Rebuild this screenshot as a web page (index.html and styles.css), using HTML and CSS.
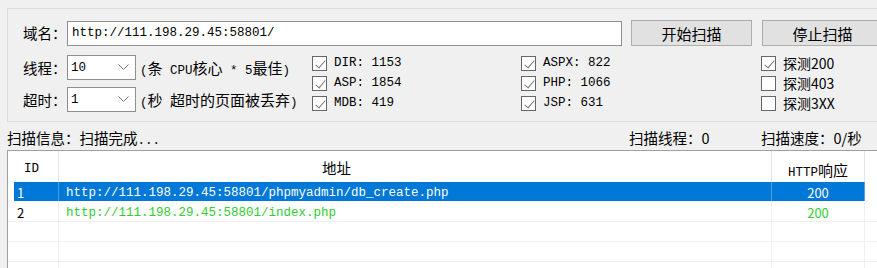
FILE: index.html
```html
<!DOCTYPE html>
<html lang="zh-CN">
<head>
    <meta charset="UTF-8">
    <title>扫描</title>
    <link rel="stylesheet" href="styles.css">
</head>
<body>
    <div class="app">
        <div class="panel">
            <div class="row-top">
                <span class="label">域名：</span>
                <input class="url-input" type="text" value="http://111.198.29.45:58801/">
                <button class="btn btn-start">开始扫描</button>
                <button class="btn btn-stop">停止扫描</button>
            </div>

            <div class="row-opts">
                <div class="opts-left">
                    <div class="field">
                        <span class="label">线程：</span>
                        <div class="combo">
                            <span>10</span>
                            <svg width="11" height="7" viewBox="0 0 11 7"><polyline points="0.5,0.5 5.5,5.5 10.5,0.5" fill="none" stroke="#7a7a7a" stroke-width="1"/></svg>
                        </div>
                        <span class="hint">(<span class="wide">条</span> CPU<span class="wide">核心</span> * 5<span class="wide">最佳</span>)</span>
                    </div>
                    <div class="field">
                        <span class="label">超时：</span>
                        <div class="combo">
                            <span>1</span>
                            <svg width="11" height="7" viewBox="0 0 11 7"><polyline points="0.5,0.5 5.5,5.5 10.5,0.5" fill="none" stroke="#7a7a7a" stroke-width="1"/></svg>
                        </div>
                        <span class="hint">(<span class="wide">秒</span> <span class="wide">超时的页面被丢弃</span>)</span>
                    </div>
                </div>

                <div class="checks checks-a">
                    <label class="check"><span class="box on"></span>DIR: 1153</label>
                    <label class="check"><span class="box on"></span>ASP: 1854</label>
                    <label class="check"><span class="box on"></span>MDB: 419</label>
                </div>
                <div class="checks checks-b">
                    <label class="check"><span class="box on"></span>ASPX: 822</label>
                    <label class="check"><span class="box on"></span>PHP: 1066</label>
                    <label class="check"><span class="box on"></span>JSP: 631</label>
                </div>
                <div class="checks checks-c">
                    <label class="check"><span class="box on"></span>探测200</label>
                    <label class="check"><span class="box"></span>探测403</label>
                    <label class="check"><span class="box"></span>探测3XX</label>
                </div>
            </div>
        </div>

        <div class="status">
            <span>扫描信息：扫描完成<span class="dots">...</span></span>
            <span>扫描线程：0</span>
            <span>扫描速度：0/秒</span>
        </div>

        <div class="list">
            <div class="list-head">
                <div class="th th-id">ID</div>
                <div class="th th-url">地址</div>
                <div class="th th-code">HTTP<span class="wide">响应</span></div>
                <div class="th"></div>
            </div>
            <div class="list-row selected">
                <div class="td td-id">1</div>
                <div class="td td-url">http://111.198.29.45:58801/phpmyadmin/db_create.php</div>
                <div class="td td-code">200</div>
                <div class="td td-rest"></div>
            </div>
            <div class="list-row">
                <div class="td td-id">2</div>
                <div class="td td-url ok">http://111.198.29.45:58801/index.php</div>
                <div class="td td-code ok">200</div>
                <div class="td td-rest"></div>
            </div>
            <div class="list-row">
                <div class="td td-id"></div>
                <div class="td td-url"></div>
                <div class="td td-code"></div>
                <div class="td td-rest"></div>
            </div>
            <div class="list-row">
                <div class="td td-id"></div>
                <div class="td td-url"></div>
                <div class="td td-code"></div>
                <div class="td td-rest"></div>
            </div>
            <div class="list-row">
                <div class="td td-id"></div>
                <div class="td td-url"></div>
                <div class="td td-code"></div>
                <div class="td td-rest"></div>
            </div>
        </div>
    </div>
</body>
</html>
```

FILE: styles.css
```css
* {
    margin: 0;
    padding: 0;
    box-sizing: border-box;
}

body {
    background: #f0f0f0;
    font-family: "Noto Sans CJK SC", sans-serif;
    font-size: 14px;
    color: #000;
    overflow: hidden;
    width: 877px;
    height: 268px;
}

.app {
    width: 920px;
    height: 268px;
    overflow: hidden;
    padding: 8px 0 0 7px;
}

.wide {
    font-family: "Noto Sans CJK SC", sans-serif;
    font-size: 15px;
}

/* top group */
.panel {
    border: 1px solid #dcdcdc;
    height: 114px;
    padding: 11px 0 0 15px;
}

.row-top {
    display: flex;
    align-items: center;
    height: 26px;
}

.label {
    flex: none;
    width: 44px;
    font-size: 14.5px;
    line-height: 20px;
}

.url-input {
    width: 555px;
    height: 25px;
    border: 1px solid #8f8f8f;
    background: #fff;
    padding: 0 4px;
    font-family: "Liberation Mono", monospace;
    font-size: 12.5px;
    color: #000;
    outline: none;
}

.btn {
    flex: none;
    width: 121px;
    height: 26px;
    background: #e1e1e1;
    border: 1px solid #adadad;
    font-family: "Noto Sans CJK SC", sans-serif;
    font-size: 15px;
    color: #000;
}

.btn-start {
    margin-left: 9px;
}

.btn-stop {
    margin-left: 10px;
}

.row-opts {
    display: flex;
    margin-top: 9px;
}

.opts-left {
    width: 289px;
    display: flex;
    flex-direction: column;
    gap: 7px;
}

.field {
    display: flex;
    align-items: center;
    height: 25px;
}

.combo {
    flex: none;
    width: 69px;
    height: 25px;
    border: 1px solid #8f8f8f;
    background: #fff;
    display: flex;
    align-items: center;
    justify-content: space-between;
    padding: 0 6px 0 3px;
    font-family: "Liberation Mono", monospace;
    font-size: 12.5px;
}

.hint {
    margin-left: 4px;
    white-space: nowrap;
    font-family: "Liberation Mono", monospace;
    font-size: 12.5px;
}

.checks {
    display: flex;
    flex-direction: column;
    gap: 4px;
}

.checks-a {
    width: 209px;
}

.checks-b {
    width: 240px;
}

.check {
    display: flex;
    align-items: center;
    height: 16px;
    white-space: nowrap;
    font-family: "Liberation Mono", monospace;
    font-size: 12.5px;
}

.checks-c .check {
    font-family: "Noto Sans CJK SC", sans-serif;
    font-size: 14px;
}

.box {
    flex: none;
    width: 15px;
    height: 15px;
    border: 1px solid #666;
    background: #fff;
    margin-right: 7px;
    position: relative;
}

.box.on::after {
    content: "";
    position: absolute;
    left: 5px;
    top: 1px;
    width: 4px;
    height: 9px;
    border: solid #777;
    border-width: 0 1px 1px 0;
    transform: rotate(40deg);
}

/* status line */
.status {
    display: grid;
    grid-template-columns: 622px 132px auto;
    height: 28px;
    padding-top: 6px;
    line-height: 20px;
    font-size: 14.5px;
    white-space: nowrap;
}

.dots {
    font-family: "Liberation Mono", monospace;
    font-size: 12.5px;
}

/* result list */
.list {
    border-top: 1px solid #a0a0a0;
    border-left: 1px solid #a0a0a0;
    background: #fff;
    height: 200px;
}

.list-head,
.list-row {
    display: grid;
    grid-template-columns: 51px 713px 93px 1fr;
}

.list-head {
    height: 31px;
}

.th {
    border-right: 1px solid #e5e5e5;
    padding-top: 3px;
    line-height: 31px;
    font-family: "Liberation Mono", monospace;
    font-size: 12.5px;
    white-space: nowrap;
}

.th:last-child {
    border-right: none;
}

.th-id {
    text-align: center;
    padding-right: 3px;
}

.th-url {
    font-family: "Noto Sans CJK SC", sans-serif;
    font-size: 14.5px;
    padding-top: 1px;
    padding-left: 263px;
}

.th-code {
    text-align: center;
}

.list-row {
    height: 20px;
    border-bottom: 1px solid #f0f0f0;
}

.td {
    border-right: 1px solid #f0f0f0;
    line-height: 19px;
    padding-top: 2px;
    white-space: nowrap;
    overflow: hidden;
}

.td-id {
    margin-left: 6px;
    padding-left: 3px;
    padding-top: 1px;
    font-size: 13px;
}

.td-url {
    padding-left: 7px;
    font-family: "Liberation Mono", monospace;
    font-size: 12.5px;
}

.td-code {
    text-align: center;
    padding-top: 1px;
    font-size: 13px;
}

.td-rest {
    border-right: none;
}

.ok {
    color: #33cc33;
}

.list-row.selected {
    border-bottom-color: #fff;
}

.list-row.selected .td {
    background: #0078d7;
    color: #fff;
    border-right-color: #4d9fe3;
}

.list-row.selected .td-rest {
    background: #fff;
}
```
